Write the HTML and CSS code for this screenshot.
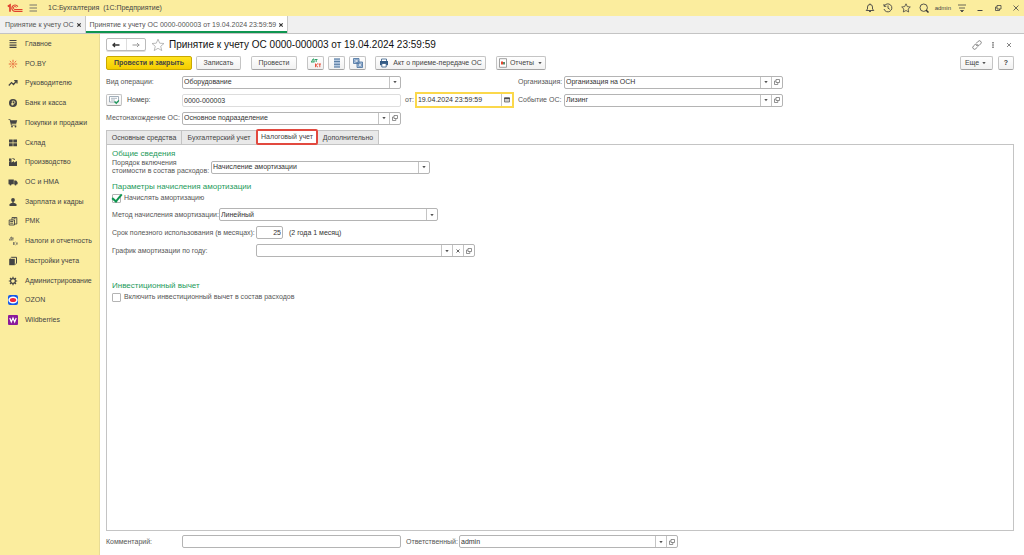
FILE: index.html
```html
<!DOCTYPE html>
<html lang="ru">
<head>
<meta charset="utf-8">
<title>1С:Бухгалтерия (1С:Предприятие)</title>
<link rel="stylesheet" href="styles.css">
</head>
<body>
<svg class="sprite" aria-hidden="true">
  <symbol id="open" viewBox="0 0 8 8"><path d="M3 1.500h3.500v3H3zM3 3H1.500v3.500h3.300V4.500" fill="none" stroke="#777" stroke-width=".8"/></symbol>
  <symbol id="down" viewBox="0 0 8 8"><path d="M2.300 3h3.400L4 5.200z" fill="#555"/></symbol>
  <symbol id="cross" viewBox="0 0 8 8"><path d="M2.500 2.500l3 3M5.500 2.500l-3 3" stroke="#555" stroke-width=".9" fill="none"/></symbol>
</svg>
<div class="app">
  <header class="topbar">
    <svg class="logo" viewBox="0 0 16 10"><g fill="none" stroke="#e0402e"><path d="M.8 3.500L3 2v6.800" stroke-width="1.700"/><path d="M10.800 3.600A3.200 3.200 0 1 0 8 8.400h7.500" stroke-width="1.200"/><path d="M9.300 4.500A1.500 1.500 0 1 0 8 6.500h7.500" stroke-width="1"/></g></svg>
    <button class="plain menu" aria-label="Меню"><svg class="ic" viewBox="0 0 10 10"><path d="M1.500 2h7.500M1.500 5h7.500M1.500 8h7.500" stroke="#666" stroke-width=".9"/></svg></button>
    <span class="app-name">1С:Бухгалтерия&nbsp; (1С:Предприятие)</span>
    <div class="sys">
      <button class="plain" aria-label="Уведомления"><svg class="ic" viewBox="0 0 10 10"><path d="M1.200 7.500h7.600L7.500 6V4a2.500 2.500 0 0 0-5 0v2zM4 8.200q1 1.400 2 0M5 .5v1" fill="none" stroke="#444" stroke-width=".9"/></svg></button>
      <button class="plain" aria-label="История"><svg class="ic" viewBox="0 0 10 10"><path d="M1.300 3A4 4 0 1 1 1 6M1 1v2.300h2.300M5 2.500v2.700L6.800 6.300" fill="none" stroke="#444" stroke-width=".9"/></svg></button>
      <button class="plain" aria-label="Избранное"><svg class="ic" viewBox="0 0 10 10"><path d="M5 .8l1.300 2.800 3 .4-2.200 2 .6 3L5 7.500 2.300 9l.6-3L.7 4l3-.4z" fill="none" stroke="#444" stroke-width=".8"/></svg></button>
      <button class="plain" aria-label="Поиск"><svg class="ic" viewBox="0 0 10 10"><circle cx="4.700" cy="4.700" r="3.700" fill="none" stroke="#444" stroke-width=".9"/><path d="M7 7l2.500 2.500" stroke="#333" stroke-width="1.500"/></svg></button>
      <span class="user">admin</span>
      <button class="plain" aria-label="Настройки"><svg class="ic" viewBox="0 0 10 10"><path d="M1 2h8M2 5h6M3.500 7.500h3L5 9z" fill="#444" stroke="#444" stroke-width=".8"/></svg></button>
      <button class="plain" aria-label="Свернуть"><svg class="ic" viewBox="0 0 10 10"><path d="M2.500 7.500h5" stroke="#444"/></svg></button>
      <button class="plain" aria-label="Развернуть"><svg class="ic" viewBox="0 0 10 10"><path d="M4 2.500h4v3.500H4zM4 4H2.500v3.500h4V6" fill="none" stroke="#444" stroke-width=".8"/></svg></button>
      <button class="plain" aria-label="Закрыть"><svg class="ic" viewBox="0 0 10 10"><path d="M2.500 2.500l5 5M7.500 2.500l-5 5" stroke="#444" stroke-width=".8"/></svg></button>
    </div>
  </header>

  <nav class="windows">
    <div class="window"><a href="#list">Принятие к учету ОС</a><button class="plain" aria-label="Закрыть вкладку"><svg class="x" viewBox="0 0 8 8"><path d="M2.300 2.300l3.400 3.400M5.700 2.300L2.300 5.700" stroke="#333" stroke-width="1.100"/></svg></button></div>
    <div class="window current"><a href="#doc">Принятие к учету ОС 0000-000003 от 19.04.2024 23:59:59</a><button class="plain" aria-label="Закрыть вкладку"><svg class="x" viewBox="0 0 8 8"><path d="M2.300 2.300l3.400 3.400M5.700 2.300L2.300 5.700" stroke="#333" stroke-width="1.100"/></svg></button></div>
  </nav>

  <div class="body">
    <nav class="sidebar">
      <ul>
        <li><a href="#m"><svg class="ic" viewBox="0 0 10 10"><path d="M1.500 1.500h7M1.500 3.800h7M1.500 6.100h7M1.500 8.400h7" stroke="#444" stroke-width="1.100"/></svg>Главное</a></li>
        <li><a href="#m"><svg class="ic" viewBox="0 0 10 10"><path d="M5 .8v2.700M5 6.500v2.700M.8 5h2.700M6.500 5h2.700M1.800 2l1.700 1.600M8.200 2L6.500 3.600M1.800 8l1.700-1.600M8.200 8L6.500 6.400" stroke="#e4572e" stroke-width=".9"/><circle cx="5" cy="5" r=".9" fill="#e4572e"/></svg>РО.BY</a></li>
        <li><a href="#m"><svg class="ic" viewBox="0 0 10 10"><path d="M.8 7.500l2.700-3 2 2L8.500 3M6.200 2.700H9v2.800" fill="none" stroke="#444" stroke-width="1.200"/></svg>Руководителю</a></li>
        <li><a href="#m"><svg class="ic" viewBox="0 0 10 10"><circle cx="5" cy="5" r="4" fill="#444"/><path d="M4.300 7.500V3h1.400a1.200 1.200 0 0 1 0 2.500H3.300M3.300 6.600h2.500" fill="none" stroke="#fbed9e" stroke-width=".8"/></svg>Банк и касса</a></li>
        <li><a href="#m"><svg class="ic" viewBox="0 0 10 10"><path d="M.5 1.200h1.800l.4 1h6.500l-1 3.600H3.500l.2.900h4.600v.8H3L1.700 2H.5z" fill="#444"/><circle cx="4" cy="8.600" r=".9" fill="#444"/><circle cx="7.500" cy="8.600" r=".9" fill="#444"/></svg>Покупки и продажи</a></li>
        <li><a href="#m"><svg class="ic" viewBox="0 0 10 10"><path d="M1 1.500h3.700v3H1zM5.300 1.500H9v3H5.300zM1 5.200h3.700v3H1zM5.300 5.200H9v3H5.300z" fill="#444"/></svg>Склад</a></li>
        <li><a href="#m"><svg class="ic" viewBox="0 0 10 10"><path d="M1 9V5l2.500-1.500V5.500L6 4v1.500L9 4v5zM1 1.500h2.500v2L1 4.500z" fill="#444"/><path d="M4.500 1.500l2.500 1" stroke="#444"/></svg>Производство</a></li>
        <li><a href="#m"><svg class="ic" viewBox="0 0 10 10"><path d="M.5 2.500h5.300v4.800H.5zM6.200 3.500h2l1.400 1.800v2H6.200z" fill="#444"/><circle cx="2.500" cy="7.600" r="1" fill="#444"/><circle cx="7.500" cy="7.600" r="1" fill="#444"/></svg>ОС и НМА</a></li>
        <li><a href="#m"><svg class="ic" viewBox="0 0 10 10"><circle cx="5" cy="3" r="1.900" fill="#444"/><path d="M1.500 9V7.500q0-1 2-1.500h3q2 .5 2 1.500V9z" fill="#444"/><path d="M4.300 4.500h1.400V6.500H4.300z" fill="#444"/></svg>Зарплата и кадры</a></li>
        <li><a href="#m"><svg class="ic" viewBox="0 0 10 10"><path d="M1.200 4h5.300v5H1.200zM4 4V1.500h4.800V8H6.500M2.200 5.500h3M2.200 7.200h3M5.500 2.700h2" fill="none" stroke="#444" stroke-width=".9"/></svg>РМК</a></li>
        <li><a href="#m"><svg class="ic" viewBox="0 0 10 10"><path d="M1 4h3.200M1.500 4L3 1h.7v3M4 2h1.700M4.900 2v2.500M5.500 6v3M7.500 6L5.800 7.500l1.700 1.500M8 7h1.800M8.900 7v2" fill="none" stroke="#555" stroke-width=".7"/></svg>Налоги и отчетность</a></li>
        <li><a href="#m"><svg class="ic" viewBox="0 0 10 10"><path d="M1.200 2.800h5.600v6.400H1.200z" fill="#444"/><path d="M2.500 2.200l1-.9h5v6l-1.200 1" fill="none" stroke="#444" stroke-width="1"/></svg>Настройки учета</a></li>
        <li><a href="#m"><svg class="ic" viewBox="0 0 10 10"><circle cx="5" cy="5" r="2.400" fill="none" stroke="#444" stroke-width="1.200"/><path d="M5 .8v1.600M5 7.600v1.600M.8 5h1.600M7.600 5h1.600M2 2l1.200 1.200M8 2L6.800 3.200M2 8l1.200-1.200M8 8L6.800 6.800" stroke="#444" stroke-width="1.200"/></svg>Администрирование</a></li>
        <li><a href="#m"><svg class="ic" viewBox="0 0 10 10"><rect width="10" height="10" rx="2" fill="#1458e8"/><ellipse cx="5" cy="5" rx="4.700" ry="3.500" fill="#fff"/><ellipse cx="5" cy="5" rx="3.200" ry="2" fill="#f0263c"/></svg>OZON</a></li>
        <li><a href="#m"><svg class="ic" viewBox="0 0 10 10"><rect width="10" height="10" rx="1" fill="#8b1a9b"/><path d="M1.800 3l1.500 4L5 3l1.700 4 1.500-4" fill="none" stroke="#fff" stroke-width="1.200"/></svg>Wildberries</a></li>
      </ul>
    </nav>

    <main class="doc">
      <div class="title-row">
        <div class="history">
          <button class="plain" aria-label="Назад"><svg class="arrow" viewBox="0 0 10 8"><path d="M1.500 4h7M4 2L2 4l2 2" fill="none" stroke="#333" stroke-width="1.300"/></svg></button>
          <button class="plain" aria-label="Вперед"><svg class="arrow" viewBox="0 0 10 8"><path d="M1.500 4h7M6 2l2 2-2 2" fill="none" stroke="#999" stroke-width="1"/></svg></button>
        </div>
        <button class="plain" aria-label="В избранное"><svg class="star" viewBox="0 0 14 14"><path d="M7 1.200l1.700 4 4.300.3-3.300 2.800 1.100 4.300L7 10.300l-3.800 2.300 1.100-4.300L1 5.500l4.300-.3z" fill="none" stroke="#aaa" stroke-width=".8"/></svg></button>
        <h1>Принятие к учету ОС 0000-000003 от 19.04.2024 23:59:59</h1>
        <div class="doc-tools">
          <button class="plain" aria-label="Ссылка"><svg class="ic" viewBox="0 0 10 10"><path d="M4.200 6L6 4.200M4.500 3l1.700-1.700a1.700 1.700 0 0 1 2.500 2.500L7 5.500q-1 .8-2 .2M5.500 7L3.800 8.700A1.700 1.700 0 0 1 1.300 6.200L3 4.500q1-.8 2-.2" fill="none" stroke="#666" stroke-width=".8"/></svg></button>
          <button class="plain" aria-label="Еще действия"><svg class="ic" viewBox="0 0 10 10"><path d="M4.300 2h1.400v1.400H4.300zM4.300 4.300h1.400v1.400H4.300zM4.300 6.600h1.400V8H4.300z" fill="#666"/></svg></button>
          <button class="plain" aria-label="Закрыть документ"><svg class="ic" viewBox="0 0 10 10"><path d="M3 3l4 4M7 3L3 7" stroke="#666" stroke-width=".8"/></svg></button>
        </div>
      </div>

      <div class="toolbar">
        <button class="btn primary">Провести и закрыть</button>
        <button class="btn save">Записать</button>
        <button class="btn post">Провести</button>
        <button class="btn icon" aria-label="Дт Кт"><svg class="wide" viewBox="0 0 12 10"><path d="M1 4h3.500M1.500 4L3 1h1v3M5 1.500h2.500M6.200 1.500V4" fill="none" stroke="#1c9a5a" stroke-width=".9"/><path d="M5.500 5.500v3.700M8 5.500L5.800 7.300 8 9.200M8.500 6H11M9.800 6v3.200" fill="none" stroke="#e5452f" stroke-width=".9"/></svg></button>
        <button class="btn icon" aria-label="Реестр"><svg class="ic" viewBox="0 0 10 10"><path d="M2 .5h6v9H2z" fill="#b5c9e0"/><path d="M2 1h6M2 3.600h6M2 6.300h6M2 9h6" stroke="#54799f" stroke-width="1"/></svg></button>
        <button class="btn icon" aria-label="Структура подчиненности"><svg class="ic" viewBox="0 0 10 10"><path d="M.5.500h5.500v5H.5zM4 4h5.500v5.500H4z" fill="#a9c1dc" stroke="#466f9d" stroke-width=".8"/><path d="M2 2h3v2H2zM5.500 6h3v2h-3z" fill="#fff" stroke="#466f9d" stroke-width=".5"/></svg></button>
        <button class="btn act"><svg class="ic" viewBox="0 0 10 10"><path d="M2.500 3V1h5v2" fill="#fff" stroke="#345b85" stroke-width=".8"/><path d="M1 3h8v4.200H1z" fill="#345b85"/><path d="M2.800 5.500h4.400V9H2.800z" fill="#fff" stroke="#345b85" stroke-width=".8"/></svg>Акт о приеме-передаче ОС</button>
        <button class="btn reports"><svg class="ic" viewBox="0 0 10 10"><path d="M1.500.700h7v8.600h-7z" fill="#fff" stroke="#888" stroke-width=".8"/><path d="M3 3.500h2v3H3z" fill="#e5452f"/><path d="M5 4h2v2.500H5z" fill="#5a8a6a"/></svg>Отчеты<svg class="x"><use href="#down"/></svg></button>
        <button class="btn more">Еще<svg class="x"><use href="#down"/></svg></button>
        <button class="btn help">?</button>
      </div>

      <div class="head-form">
        <label for="op">Вид операции:</label>
        <div class="combo"><select id="op"><option>Оборудование</option></select><span class="cell"><svg class="x"><use href="#down"/></svg></span></div>
        <span></span>
        <label for="org">Организация:</label>
        <div class="combo"><select id="org"><option>Организация на ОСН</option></select><span class="cell"><svg class="x"><use href="#down"/></svg></span><button class="cell" aria-label="Открыть"><svg class="x"><use href="#open"/></svg></button></div>

        <div class="number-label"><button class="btn mini" aria-label="Нумерация"><svg class="wide" viewBox="0 0 12 10"><path d="M1.500 1.500h9v5.500h-9z" fill="#fff" stroke="#8a9aa8" stroke-width=".8"/><path d="M3 3.300h6M3 5h4" stroke="#8a9aa8" stroke-width=".7"/><path d="M6.500 6.500l1.800 1.800 2.500-3" fill="none" stroke="#1c9a5a" stroke-width="1.300"/></svg></button><label for="num">Номер:</label></div>
        <input class="field muted" id="num" value="0000-000003">
        <div class="date-group"><label for="date">от:</label><div class="combo focus"><input id="date" value="19.04.2024 23:59:59"><button class="cell" aria-label="Календарь"><svg class="x" viewBox="0 0 8 8"><path d="M1.500 2h5v4h-5z" fill="#ccc" stroke="#666" stroke-width=".8"/><path d="M1.200 2.200h5.600" stroke="#444" stroke-width="1.400"/></svg></button></div></div>
        <label for="event">Событие ОС:</label>
        <div class="combo"><select id="event"><option>Лизинг</option></select><span class="cell"><svg class="x"><use href="#down"/></svg></span><button class="cell" aria-label="Открыть"><svg class="x"><use href="#open"/></svg></button></div>

        <label for="place">Местонахождение ОС:</label>
        <div class="combo"><select id="place"><option>Основное подразделение</option></select><span class="cell"><svg class="x"><use href="#down"/></svg></span><button class="cell" aria-label="Открыть"><svg class="x"><use href="#open"/></svg></button></div>
      </div>

      <div class="tabs" role="tablist">
        <button role="tab" class="tab t1">Основные средства</button>
        <button role="tab" class="tab t2">Бухгалтерский учет</button>
        <button role="tab" class="tab t3 selected" aria-selected="true">Налоговый учет</button>
        <button role="tab" class="tab t4">Дополнительно</button>
      </div>

      <section class="panel">
        <h2>Общие сведения</h2>
        <div class="row order"><label for="order">Порядок включения<br>стоимости в состав расходов:</label>
          <div class="combo"><select id="order"><option>Начисление амортизации</option></select><span class="cell"><svg class="x"><use href="#down"/></svg></span></div></div>
        <h2>Параметры начисления амортизации</h2>
        <label class="check"><input type="checkbox" checked>Начислять амортизацию</label>
        <div class="row method"><label for="method">Метод начисления амортизации:</label>
          <div class="combo"><select id="method"><option>Линейный</option></select><span class="cell"><svg class="x"><use href="#down"/></svg></span></div></div>
        <div class="row term"><label for="term">Срок полезного использования (в месяцах):</label>
          <input class="field months" id="term" value="25"><span class="dark">(2 года 1 месяц)</span></div>
        <div class="row term"><label for="graph">График амортизации по году:</label>
          <div class="combo"><select id="graph"><option></option></select><span class="cell"><svg class="x"><use href="#down"/></svg></span><button class="cell" aria-label="Очистить"><svg class="x"><use href="#cross"/></svg></button><button class="cell" aria-label="Открыть"><svg class="x"><use href="#open"/></svg></button></div></div>
        <h2 class="invest">Инвестиционный вычет</h2>
        <label class="check"><input type="checkbox">Включить инвестиционный вычет в состав расходов</label>
      </section>

      <footer class="foot">
        <label for="comment">Комментарий:</label>
        <input class="field" id="comment">
        <label for="resp">Ответственный:</label>
        <div class="combo"><select id="resp"><option>admin</option></select><span class="cell"><svg class="x"><use href="#down"/></svg></span><button class="cell" aria-label="Открыть"><svg class="x"><use href="#open"/></svg></button></div>
      </footer>
    </main>
  </div>
</div>
</body>
</html>
```

FILE: styles.css
```css
* { box-sizing: border-box; }
body { margin: 0; background: #fff; color: #555; font: 7px/8px "Liberation Sans", Arial, sans-serif; }
button, input, select { font: inherit; color: inherit; margin: 0; }
a { color: inherit; text-decoration: none; }
h1, h2, ul { margin: 0; padding: 0; font-weight: 400; }
svg { display: block; flex: none; }
.sprite { position: absolute; width: 0; height: 0; }
.ic { width: 10px; height: 10px; }
.wide { width: 12px; height: 10px; }
.x { width: 8px; height: 8px; }
.arrow { width: 10px; height: 8px; }
.star { width: 14px; height: 14px; }
.plain { border: 0; padding: 0; background: none; }

.app { display: flex; flex-direction: column; min-height: 100vh; }

.topbar { display: flex; align-items: center; height: 16px; padding: 0 3px 0 7px; background: #fbed9e; color: #444; }
.logo { width: 16px; height: 10px; }
.menu { margin: 0 10px 0 5px; }
.sys { display: flex; align-items: center; gap: 8px; margin-left: auto; }
.user { margin: 0 -2px; font-size: 6px; }

.windows { display: flex; height: 18px; background: #f0f0f0; border-bottom: 1px solid #c4c4c4; white-space: nowrap; }
.window { display: flex; align-items: center; gap: 1px; padding: 0 2px 0 5px; }
.window.current { gap: 1px; padding: 0 2px 0 4px; background: #fff; border: solid #c8c8c8; border-width: 0 1px; box-shadow: inset 0 -2px #0e9550; }

.body { display: flex; flex: 1; }
.sidebar { flex: none; width: 100px; background: #fbed9e; border-right: 1px solid #e8dc96; }
.sidebar ul { display: grid; grid-auto-rows: 1fr; height: 296px; list-style: none; }
.sidebar a { display: flex; align-items: center; gap: 7px; height: 100%; padding-left: 8px; color: #444; white-space: nowrap; }

.doc { display: flex; flex: 1; flex-direction: column; min-width: 0; padding: 4px 10px 7px 6px; }

.title-row { display: flex; align-items: center; height: 13px; }
.history { display: flex; width: 40px; height: 13px; margin-right: 5px; border: 1px solid #bbb; border-radius: 2px; box-shadow: 0 1px #ddd; }
.history button { display: grid; flex: 1; place-items: center; }
.history button + button { border-left: 1px solid #ddd; }
h1 { margin-left: 4px; color: #111; font-size: 10px; line-height: 12px; white-space: nowrap; }
.doc-tools { display: flex; gap: 6px; margin-left: auto; }

.toolbar { display: flex; align-items: center; margin: 5px 0 3px; }
.btn { display: flex; align-items: center; justify-content: center; gap: 4px; height: 14px; padding: 0; border: 1px solid #c4c4c4; border-bottom-color: #a4a4a4; border-radius: 2px; background: linear-gradient(#fff, #f1f1f1); color: #444; white-space: nowrap; }
.primary { width: 86px; border-color: #c9a800; background: linear-gradient(#ffe31f, #f4cd00); color: #444; font-weight: 700; }
.save { width: 45px; margin-left: 4px; }
.post { width: 46px; margin-left: 10px; }
.icon { width: 17px; margin-left: 4px; }
.post + .icon { margin-left: 10px; }
.act { width: 111px; margin-left: 9px; }
.reports { width: 50px; margin-left: 10px; gap: 2px; }
.more { width: 33px; margin-left: auto; gap: 1px; }
.help { width: 16px; margin-left: 5px; font-weight: 700; }
.mini { width: 16px; height: 12px; }

.head-form { display: grid; grid-template-columns: 76px minmax(0, 219px) 117px 46px minmax(0, 219px); grid-auto-rows: 18px; align-items: center; white-space: nowrap; }
.number-label { display: flex; align-items: center; gap: 5px; color: #444; }
.date-group { display: flex; align-items: center; gap: 1px; padding-right: 4px; padding-left: 4px; }
.date-group .combo { flex: 1; }

.combo, .field { height: 13px; border: 1px solid #b4b4b4; border-radius: 2px; background: #fff; color: #333; }
.combo { display: flex; min-width: 0; }
.combo select, .combo input { flex: 1; min-width: 0; padding: 0 1px; border: 0; outline: 0; background: none; appearance: none; }
.cell { display: grid; flex: none; place-items: center; width: 11px; padding: 0; border: 0; border-left: 1px solid #c4c4c4; background: none; }
.focus { height: 16px; border: 2px solid #fbd84b; border-radius: 0; }
.field { min-width: 0; padding: 0 1px; }
.muted { border-color: #ddd; }

.tabs { display: flex; margin-top: 3px; }
.tab { height: 14px; padding: 0; border: 1px solid #c4c4c4; border-width: 1px 1px 0 0; background: #e9e9e9; color: #444; white-space: nowrap; }
.t1 { width: 76px; border-left-width: 1px; }
.t2 { width: 75px; }
.t4 { width: 61px; }
.tab.selected { height: 16px; width: 62px; margin: -1px 0 -1px -1px; z-index: 1; border: 2px solid #e2493f; border-radius: 2px; background: #fff; }

.panel { flex: 1; padding: 4px 5px; border: 1px solid #c4c4c4; white-space: nowrap; }
h2 { color: #1c9a5a; font-size: 8px; line-height: 10px; }
.row { display: grid; align-items: center; }
.order { grid-template-columns: 99px minmax(0, 219px); margin-bottom: 7px; }
.method { grid-template-columns: 107px minmax(0, 219px); margin: 4px 0 5px; }
.term { grid-template-columns: 144px minmax(0, 219px); margin-bottom: 5px; }
.term:has(.months) { grid-template-columns: 144px 27px auto; }
.months { text-align: right; }
.dark { padding-left: 6px; color: #333; }
.invest { margin-top: 24px; }
.check { display: flex; align-items: center; gap: 3px; height: 12px; }
.check input { display: grid; place-items: center; width: 9px; height: 9px; border: 1px solid #b4b4b4; border-radius: 1px; background: #fff; appearance: none; }
.check input:checked::before { content: ""; width: 4px; height: 8px; margin-top: -3px; border: solid #0e9550; border-width: 0 2px 2px 0; transform: rotate(40deg); }

.foot { display: grid; grid-template-columns: 76px minmax(0, 219px) 58px minmax(0, 219px); align-items: center; margin-top: 4px; }
.foot label:nth-of-type(2) { padding-left: 5px; }
```
